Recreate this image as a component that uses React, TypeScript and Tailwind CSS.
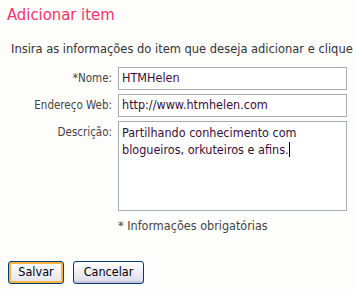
import React from 'react';

const App: React.FC = () => {
  return (
    <div className="w-[356px] h-[290px] bg-[#fdfdfb] overflow-hidden font-['DejaVu_Sans_Condensed','DejaVu_Sans',Verdana,sans-serif]">
      {/* Title */}
      <h1 className="pl-[7px] pt-[5px] text-[16.5px] leading-[20px] text-[#f2336a]">Adicionar item</h1>

      {/* Intro */}
      <p className="pl-[11px] mt-[16px] text-[12.75px] leading-[16px] text-[#333] whitespace-nowrap">
        Insira as informações do item que deseja adicionar e clique
      </p>

      {/* Form */}
      <div className="mt-[10px] grid grid-cols-[112px_229px] gap-x-[6px] text-[12.5px] text-[#444]">
        <label className="text-right text-[11.5px] pt-[3px]">*Nome:</label>
        <div className="h-[23px] border border-[#a5acb5] bg-white px-[3px] flex items-center text-[#3b0c3b]">HTMHelen</div>

        <label className="text-right text-[11.5px] pt-[3px] mt-[4px]">Endereço Web:</label>
        <div className="mt-[4px] h-[23px] border border-[#a5acb5] bg-white px-[3px] flex items-center text-[#3b0c3b]">
          http://www.htmhelen.com
        </div>

        <label className="text-right text-[11.5px] pt-[3px] mt-[4px]">Descrição:</label>
        <div className="mt-[4px] h-[90px] border border-[#a5acb5] bg-white px-[3px] pt-[2px] leading-[17px] text-[#3b0c3b]">
          Partilhando conhecimento com
          <br />
          blogueiros, orkuteiros e afins.
          <span className="inline-block w-px h-[15px] bg-black align-[-3px]" />
        </div>

        <div />
        <p className="mt-[6px] text-[#444]">* Informações obrigatórias</p>
      </div>

      {/* Buttons */}
      <div className="flex gap-[9px] pl-[8px] mt-[25px]">
        <button className="w-[56px] h-[23px] rounded-[3px] border border-[#003c74] bg-gradient-to-b from-white to-[#e3e3ef] shadow-[inset_0_0_0_2px_#f8b340] text-[12.5px] text-black">
          Salvar
        </button>
        <button className="w-[71px] h-[23px] rounded-[3px] border border-[#003c74] bg-gradient-to-b from-white to-[#dcdcea] shadow-[inset_0_-2px_0_#c6c5d7] text-[12.5px] text-black">
          Cancelar
        </button>
      </div>
    </div>
  );
};

export default App;
